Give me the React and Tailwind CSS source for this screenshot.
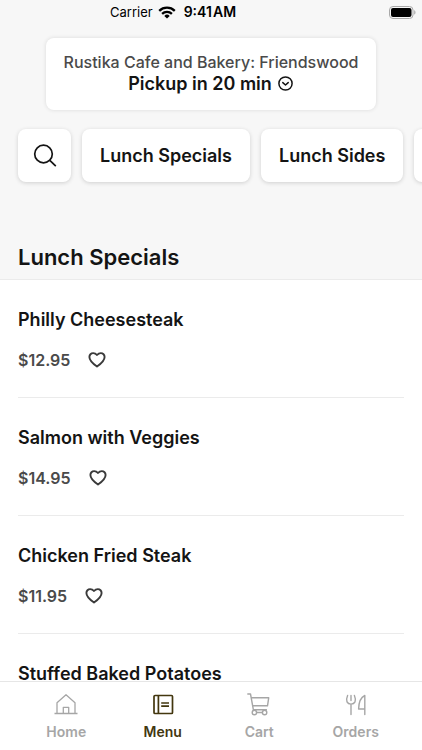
import { useState } from 'react'

const categories = ['Lunch Specials', 'Lunch Sides', 'Breakfast']

const items = [
  { name: 'Philly Cheesesteak', price: '$12.95' },
  { name: 'Salmon with Veggies', price: '$14.95' },
  { name: 'Chicken Fried Steak', price: '$11.95' },
  { name: 'Stuffed Baked Potatoes', price: '$10.95' },
]

const WifiIcon = () => (
  <svg viewBox="0 0 18 13" className="w-[18px] h-[13px]" fill="none" stroke="#000" strokeWidth="2.3" aria-hidden="true">
    <path d="M1.2 4.8a11.2 11.2 0 0 1 15.6 0" />
    <path d="M4.1 7.9a7 7 0 0 1 9.8 0" />
    <path d="M9 12.6 6.3 9.9a3.9 3.9 0 0 1 5.4 0z" fill="#000" stroke="none" />
  </svg>
)

const BatteryIcon = () => (
  <svg viewBox="0 0 27 13" className="w-[27px] h-[13px]" aria-hidden="true">
    <rect x="0.5" y="0.5" width="23.5" height="12" rx="3.5" fill="none" stroke="#a9a9a9" />
    <rect x="2" y="2" width="20.5" height="9" rx="2" fill="#000" />
    <path d="M25.2 4.3v4.4c.8-.3 1.3-1.2 1.3-2.2s-.5-1.9-1.3-2.2z" fill="#a9a9a9" />
  </svg>
)

const ChevronCircleIcon = () => (
  <svg viewBox="0 0 16 16" className="w-4 h-4" fill="none" stroke="currentColor" strokeWidth="1.5" strokeLinecap="round" strokeLinejoin="round" aria-hidden="true">
    <circle cx="7.5" cy="7.5" r="6.6" />
    <path d="M4.8 6.600 7.5 9l2.700-2.400" />
  </svg>
)

const SearchIcon = () => (
  <svg viewBox="0 0 24 24" className="w-6 h-6" fill="none" stroke="currentColor" strokeWidth="1.7" aria-hidden="true">
    <circle cx="10.5" cy="10" r="8.8" />
    <path d="m16.800 16.300 6 5.800" />
  </svg>
)

const HeartIcon = ({ filled }) => (
  <svg viewBox="0 0 18 16" className="w-[18px] h-4" fill={filled ? 'currentColor' : 'none'} stroke="currentColor" strokeWidth="1.9" strokeLinejoin="round" aria-hidden="true">
    <path d="M9 3C7.8 1.6 6.5 1.1 5.2 1.1 3 1.1 1.4 2.8 1.4 5c0 3.7 3.4 6.6 7.6 9.5 4.2-2.9 7.6-5.8 7.6-9.5 0-2.2-1.6-3.9-3.8-3.9C11.5 1.1 10.2 1.6 9 3z" />
  </svg>
)

const HomeIcon = () => (
  <svg viewBox="0 0 24 24" className="w-6 h-6" fill="none" stroke="currentColor" strokeWidth="1.3" strokeLinejoin="round" aria-hidden="true">
    <path d="M.5 21.5h23M3 21.500V10.800L12 2.800l9 8v10.700M9.300 21.500v-6.200h5.400v6.200" />
  </svg>
)

const MenuIcon = () => (
  <svg viewBox="0 0 24 24" className="w-6 h-6" fill="none" stroke="currentColor" strokeWidth="1.7" strokeLinejoin="round" aria-hidden="true">
    <rect x="3" y="3.500" width="18.500" height="18" rx="1" />
    <path d="M7.400 3.500v18M10.200 11h7.800M10.200 14.200h7.800" />
  </svg>
)

const CartIcon = () => (
  <svg viewBox="0 0 24 24" className="w-6 h-6" fill="none" stroke="currentColor" strokeWidth="1.4" strokeLinecap="round" strokeLinejoin="round" aria-hidden="true">
    <path d="M.8 2h2.700l2.900 15.800h13M4.200 5.800h17.500l-1.200 8H5.700" />
    <circle cx="7.400" cy="20.500" r="2.200" />
    <circle cx="17.600" cy="20.500" r="2.200" />
    <path d="M9.600 20.500h5.800" />
  </svg>
)

const OrdersIcon = () => (
  <svg viewBox="0 0 24 24" className="w-6 h-6" fill="none" stroke="currentColor" strokeWidth="1.4" strokeLinecap="round" strokeLinejoin="round" aria-hidden="true">
    <path d="M3.600 3.500C2.500 6 2.300 8 3 9.900c.7 1.500 2 2.200 4 2.200s3.300-.7 4-2.200c.7-1.900.5-3.900-.6-6.400M7 3.500v5M7 12.100v10.400M20.800 22.500v-19c-3.600 1.600-6 7-6.200 13.500h6.200" />
  </svg>
)

const tabs = [
  { label: 'Home', Icon: HomeIcon },
  { label: 'Menu', Icon: MenuIcon },
  { label: 'Cart', Icon: CartIcon },
  { label: 'Orders', Icon: OrdersIcon },
]

const StatusBar = () => (
  <div className="flex items-center h-6 pl-[110px] pr-1.5 text-[13px] leading-6 text-black">
    <span>Carrier</span>
    <span className="ml-[5px]"><WifiIcon /></span>
    <span className="ml-2 text-sm leading-6 font-semibold">9:41&#8202;AM</span>
    <span className="ml-auto"><BatteryIcon /></span>
  </div>
)

const MenuItem = ({ name, price }) => {
  const [liked, setLiked] = useState(false)

  return (
    <li className="pt-7 pb-[25px] border-b border-[#ebebeb]">
      <h3 className="text-lg leading-6 font-semibold text-[#141414]">{name}</h3>
      <div className="flex items-center gap-[18px] mt-4">
        <p className="text-base leading-6 font-semibold text-[#4a4a4a]">{price}</p>
        <button
          type="button"
          aria-label={`Add ${name} to favorites`}
          aria-pressed={liked}
          onClick={() => setLiked(!liked)}
          className="text-[#3a3a3a]"
        >
          <HeartIcon filled={liked} />
        </button>
      </div>
    </li>
  )
}

const App = () => {
  const [activeTab, setActiveTab] = useState('Menu')

  return (
    <div className="flex flex-col h-screen overflow-hidden bg-white font-['Inter',sans-serif]">
      <header className="flex-shrink-0 bg-[#f7f7f7] border-b border-[#ebebeb]">
        <StatusBar />

        <div className="px-[46px] pt-3.5">
          <button type="button" className="w-full h-[72px] pb-0.5 rounded-lg bg-white text-center shadow-[0_0_4px_rgba(0,0,0,0.12)]">
            <span className="block text-base leading-[22px] font-medium text-[#4a4a4a]">Rustika Cafe and Bakery: Friendswood</span>
            <span className="flex items-center justify-center gap-1.5 text-lg leading-[22px] font-semibold text-[#141414]">
              Pickup in 20 min
              <ChevronCircleIcon />
            </span>
          </button>
        </div>

        {/* Category shortcuts */}
        <div className="flex gap-[11px] px-[18px] pt-[19px] pb-2 overflow-x-auto [scrollbar-width:none]">
          <button
            type="button"
            aria-label="Search"
            className="flex flex-shrink-0 items-center justify-center w-[53px] h-[53px] rounded-lg bg-white text-[#141414] shadow-[0_1px_4px_rgba(0,0,0,0.16)]"
          >
            <SearchIcon />
          </button>
          {categories.map((c) => (
            <button
              key={c}
              type="button"
              className="flex-shrink-0 h-[53px] px-[18px] rounded-lg bg-white text-lg font-semibold text-[#141414] shadow-[0_1px_4px_rgba(0,0,0,0.16)]"
            >
              {c}
            </button>
          ))}
        </div>

        <h2 className="px-[18px] pt-[52px] pb-[7px] text-[22px] leading-[30px] font-semibold text-[#141414]">Lunch Specials</h2>
      </header>

      <main className="flex-1 min-h-0 overflow-y-auto px-[18px] [scrollbar-width:none]">
        <ul>
          {items.map((item) => (
            <MenuItem key={item.name} {...item} />
          ))}
        </ul>
      </main>

      <nav className="flex flex-shrink-0 px-[18px] pt-2.5 pb-2 border-t border-[#e6e6e6] bg-white">
        {tabs.map(({ label, Icon }) => (
          <button
            key={label}
            type="button"
            onClick={() => setActiveTab(label)}
            className={`flex flex-1 flex-col items-center gap-1.5 text-sm leading-5 font-semibold ${activeTab === label ? 'text-[#43370f]' : 'text-[#a6a6a6]'}`}
          >
            <Icon />
            {label}
          </button>
        ))}
      </nav>
    </div>
  )
}

export default App
